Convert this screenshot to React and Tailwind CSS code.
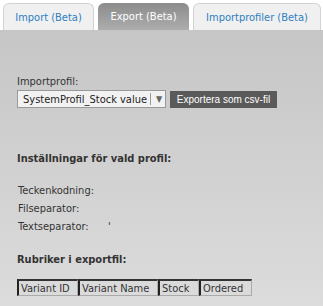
import React from "react";

const tabs = [
  { label: "Import (Beta)", w: "w-[91px]" },
  { label: "Export (Beta)", w: "w-[91px]", active: true },
  { label: "Importprofiler (Beta)", w: "w-[128px]" },
];

const cols = [
  { label: "Variant ID", w: "w-[61px]" },
  { label: "Variant Name", w: "w-[80px]" },
  { label: "Stock", w: "w-[41px]" },
  { label: "Ordered", w: "w-[53px]" },
];

export default function App() {
  return (
    <div className="w-[323px] h-[306px] flex flex-col bg-white font-['DejaVu_Sans_Condensed','DejaVu_Sans',sans-serif] text-[11px] leading-[13px] text-[#333]">
      {/* Tabs */}
      <div className="flex items-end gap-[4px] pl-[3px] pt-[3px] bg-white">
        {tabs.map((t) =>
          t.active ? (
            <div
              key={t.label}
              className={`${t.w} h-[27px] flex items-center justify-center rounded-t-[6px] bg-gradient-to-b from-[#8c8c8c] to-[#adadad] text-white text-[11px]`}
            >
              {t.label}
            </div>
          ) : (
            <div
              key={t.label}
              className={`${t.w} h-[27px] flex items-center justify-center rounded-t-[6px] border border-b-0 border-[#d3d3d3] bg-[#f0f0f0] text-[#2e7fc1] text-[11px]`}
            >
              {t.label}
            </div>
          )
        )}
      </div>

      {/* Panel */}
      <div className="flex-1 bg-gradient-to-b from-[#c6c6c6] to-[#dcdcdc] px-[17px] pt-[45px]">
        <div className="mb-[2px]">Importprofil:</div>
        <div className="flex items-center gap-[4px]">
          <div className="w-[149px] h-[18px] flex items-center border border-[#999] bg-[#f2f2f2] pl-[5px] text-[11px] text-[#222]">
            <span className="flex-1 overflow-hidden whitespace-nowrap">SystemProfil_Stock value</span>
            <span className="h-[12px] border-l border-[#999] mx-[2px]" />
            <span className="w-[12px] text-center text-[9px] text-[#666]">▼</span>
          </div>
          <div className="w-[107px] h-[17px] flex items-center justify-center bg-[#5a5a5a] text-white text-[10px] font-['Liberation_Sans',sans-serif]">
            Exportera som csv-fil
          </div>
        </div>

        <div className="mt-[44px] font-bold">Inställningar för vald profil:</div>

        <div className="mt-[19px] pl-[1px] flex flex-col gap-[5px]">
          <div>Teckenkodning:</div>
          <div>Filseparator:</div>
          <div className="flex">
            <span className="w-[90px]">Textseparator:</span>
            <span>'</span>
          </div>
        </div>

        <div className="mt-[20px] font-bold">Rubriker i exportfil:</div>

        <div className="mt-[13px] flex">
          {cols.map((c) => (
            <div
              key={c.label}
              className={`${c.w} h-[17px] flex items-center pl-[2px] border-l-2 border-t-2 border-r border-b border-l-[#222] border-t-[#333] border-r-[#aaa] border-b-[#aaa] text-[11px] text-[#333]`}
            >
              {c.label}
            </div>
          ))}
        </div>
      </div>
    </div>
  );
}
